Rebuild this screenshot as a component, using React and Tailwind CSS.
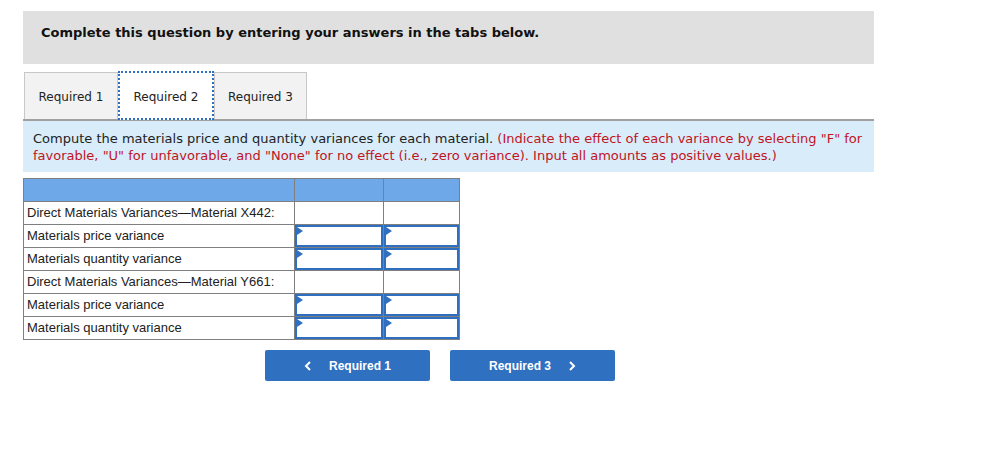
import React from "react";

const verd = { fontFamily: '"DejaVu Sans", Verdana, sans-serif' };

function InputCell() {
  return (
    <td className="border border-[#7f7f7f] p-0 h-[23px]">
      <div className="relative h-[22px] border-2 border-[#2f6fbf] bg-white">
        <div className="absolute left-0 top-0 w-0 h-0 border-t-[4px] border-b-[4px] border-l-[6px] border-t-transparent border-b-transparent border-l-[#2f6fbf]" />
      </div>
    </td>
  );
}

function Row({ label, input }) {
  return (
    <tr className="h-[23px]">
      <td className="border border-[#7f7f7f] pl-[3px] text-[13px] text-[#222]">{label}</td>
      {input ? (
        <>
          <InputCell />
          <InputCell />
        </>
      ) : (
        <>
          <td className="border border-[#7f7f7f]" />
          <td className="border border-[#7f7f7f]" />
        </>
      )}
    </tr>
  );
}

export default function App() {
  return (
    <div className="w-[995px] h-[465px] bg-white relative">
      <div className="pt-[11px] pl-[23px] w-[874px]">
        <div className="h-[53px] bg-[#e0e0e0] pl-[18px] pt-[14px]">
          <div style={verd} className="text-[13px] leading-[16px] font-bold text-[#111]">
            Complete this question by entering your answers in the tabs below.
          </div>
        </div>

        <div className="mt-[8px] flex items-end h-[47px] pl-[1px]">
          <div style={verd} className="w-[94px] h-[47px] bg-[#f2f2f2] border border-[#c8c8c8] border-b-0 flex items-center justify-center text-[12px] text-[#222] pt-[2px]">
            Required 1
          </div>
          <div style={verd} className="w-[96px] h-[49px] -mb-[1px] bg-white border-2 border-dotted border-[#2f6fbf] flex items-center justify-center text-[12px] text-[#222] relative z-10 pt-[2px]">
            Required 2
          </div>
          <div style={verd} className="w-[93px] h-[47px] bg-[#f2f2f2] border border-[#c8c8c8] border-b-0 flex items-center justify-center text-[12px] text-[#222] pt-[2px]">
            Required 3
          </div>
        </div>
        <div className="h-[2px] bg-[#a0a0a0]" />
        <div style={verd} className="bg-[#d9ecfa] h-[51px] px-[10px] pt-[9px] text-[13px] leading-[17px] text-[#222]">
          Compute the materials price and quantity variances for each material.{" "}
          <span className="text-[#c0141e]">
            (Indicate the effect of each variance by selecting "F" for favorable, "U" for unfavorable, and "None" for no effect (i.e., zero variance). Input all amounts as positive values.)
          </span>
        </div>

        <table
          style={{ fontFamily: '"Liberation Sans", Arial, sans-serif' }}
          className="mt-[6px] border-collapse w-[436px] table-fixed"
        >
          <colgroup>
            <col className="w-[271px]" />
            <col className="w-[89px]" />
            <col className="w-[76px]" />
          </colgroup>
          <tbody>
            <tr className="h-[23px] bg-[#6fa8e8]">
              <td className="border border-[#7f7f7f]" />
              <td className="border border-[#7f7f7f]" />
              <td className="border border-[#7f7f7f]" />
            </tr>
            <Row label="Direct Materials Variances—Material X442:" />
            <Row label="Materials price variance" input />
            <Row label="Materials quantity variance" input />
            <Row label="Direct Materials Variances—Material Y661:" />
            <Row label="Materials price variance" input />
            <Row label="Materials quantity variance" input />
          </tbody>
        </table>

        <div className="mt-[10px] ml-[242px] flex gap-[20px]" style={{ fontFamily: '"Liberation Sans", Arial, sans-serif' }}>
          <button className="w-[165px] h-[31px] rounded-[2px] bg-[#2f70c1] text-white text-[12px] font-bold flex items-center justify-center gap-[17px]">
            <svg width="8" height="10" viewBox="0 0 8 10"><path d="M6 1 L2 5 L6 9" stroke="white" strokeWidth="2" fill="none" /></svg>
            <span>Required 1</span>
          </button>
          <button className="w-[165px] h-[31px] rounded-[2px] bg-[#2f70c1] text-white text-[12px] font-bold flex items-center justify-center gap-[17px]">
            <span>Required 3</span>
            <svg width="8" height="10" viewBox="0 0 8 10"><path d="M2 1 L6 5 L2 9" stroke="white" strokeWidth="2" fill="none" /></svg>
          </button>
        </div>
      </div>
    </div>
  );
}
